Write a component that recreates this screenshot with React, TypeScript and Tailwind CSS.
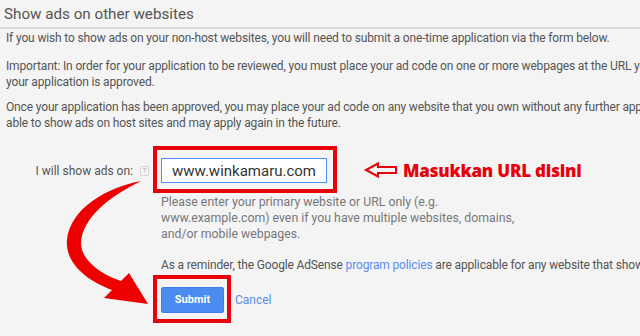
import React from "react";

function HelpIcon() {
  return (
    <span className="ml-[7px] inline-grid h-[10px] w-[9px] place-items-center rounded-[2px] border border-[#d4d4d4] bg-[#f7f7f7] text-[8px] leading-none text-[#aaa]">
      ?
    </span>
  );
}

function Annotations() {
  return (
    <svg className="pointer-events-none absolute inset-0" width="640" height="336" viewBox="0 0 640 336">
      {/* red frames */}
      <rect x="155" y="148" width="180" height="43" fill="none" stroke="#e8000b" strokeWidth="4" />
      <rect x="155" y="277" width="74" height="44" fill="none" stroke="#e8000b" strokeWidth="4" />
      {/* outline arrow pointing left */}
      <path
        d="M366 170 L378 163.5 L378 167 L396 167 L396 173 L378 173 L378 176.5 Z"
        fill="none"
        stroke="#e8000b"
        strokeWidth="2"
        strokeLinejoin="miter"
      />
      {/* curved arrow */}
      <path
        d="M141 181 C108 187 70 208 67 240 C65 262 85 280 112 290 L104 298 L148 304 L129 273 L121 281 C100 274 81 260 81 243 C82 218 110 196 141 181 Z"
        fill="#ee0000"
      />
    </svg>
  );
}

export default function App() {
  return (
    <div className="relative h-[336px] w-[640px] overflow-hidden bg-[#f4f4f4] font-['Roboto',sans-serif] text-[#555]">
      <h1 className="px-[4px] pt-[4px] text-[15.2px] leading-[21px] text-[#555]">Show ads on other websites</h1>
      <div className="mt-[2px] h-[2px] bg-[#dadada]" />

      <div className="overflow-hidden whitespace-nowrap px-[6px] text-[12px] leading-[16px] tracking-[-0.15px]">
        <p className="mt-[1px]">If you wish to show ads on your non-host websites, you will need to submit a one-time application via the form below.</p>
        <p className="mt-[12px]">
          Important: In order for your application to be reviewed, you must place your ad code on one or more webpages at the URL you
          <br />
          your application is approved.
        </p>
        <p className="mt-[9px]">
          Once your application has been approved, you may place your ad code on any website that you own without any further approval.
          <br />
          able to show ads on host sites and may apply again in the future.
        </p>
      </div>

      <div className="mt-[27px] grid grid-cols-[161px_1fr] text-[12px] leading-[16px]">
        <div className="flex h-[25px] items-center justify-end pr-[12px]">
          <span className="text-[#555]">I will show ads on:</span>
          <HelpIcon />
        </div>
        <div className="overflow-hidden">
          <div className="flex items-center">
            <div className="flex h-[25px] w-[166px] shrink-0 items-center border border-[#4d90fe] bg-white pl-[10px] text-[15px] text-[#333]">
              www.winkamaru.com
            </div>
            <span className="ml-[76px] font-['Open_Sans',sans-serif] text-[17px] font-extrabold tracking-[-0.2px] text-[#e8000b]">
              Masukkan URL disini
            </span>
          </div>
          <p className="mt-[11px] text-[12.3px] text-[#777]">
            Please enter your primary website or URL only (e.g.
            <br />
            www.example.com) even if you have multiple websites, domains,
            <br />
            and/or mobile webpages.
          </p>
          <p className="mt-[15px] whitespace-nowrap tracking-[-0.15px] text-[#555]">
            As a reminder, the Google AdSense <span className="text-[#5b8def]">program policies</span> are applicable for any website that shows ads.
          </p>
          <div className="mt-[14px] flex items-center">
            <button className="h-[26px] w-[63px] rounded-[2px] border border-[#3d7fe8] bg-[#4b8cf3] text-[11px] font-bold text-white">
              Submit
            </button>
            <span className="ml-[11px] text-[#5b8def]">Cancel</span>
          </div>
        </div>
      </div>

      <Annotations />
    </div>
  );
}
